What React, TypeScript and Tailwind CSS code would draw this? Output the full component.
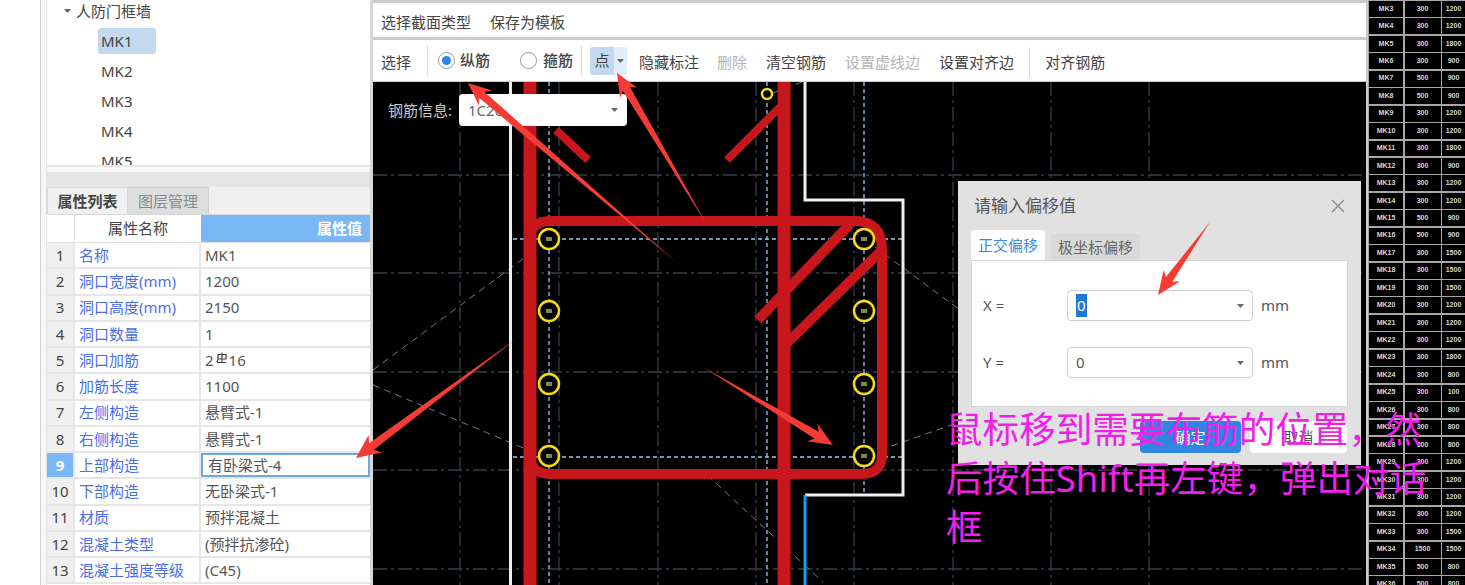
const sans = "font-['Noto_Sans','Noto_Sans_CJK_SC',sans-serif]";

const props = [
    ['名称', 'MK1'],
    ['洞口宽度(mm)', '1200'],
    ['洞口高度(mm)', '2150'],
    ['洞口数量', '1'],
    ['洞口加筋', 'rebar'],
    ['加筋长度', '1100'],
    ['左侧构造', '悬臂式-1'],
    ['右侧构造', '悬臂式-1'],
    ['上部构造', '有卧梁式-4'],
    ['下部构造', '无卧梁式-1'],
    ['材质', '预拌混凝土'],
    ['混凝土类型', '(预拌抗渗砼)'],
    ['混凝土强度等级', '(C45)'],
];

const sheet = [
    ['MK3', '300', '1200'], ['MK4', '300', '1200'], ['MK5', '300', '1800'], ['MK6', '300', '900'],
    ['MK7', '500', '900'], ['MK8', '500', '900'], ['MK9', '300', '1200'], ['MK10', '300', '1200'],
    ['MK11', '300', '1800'], ['MK12', '300', '900'], ['MK13', '300', '1200'], ['MK14', '300', '1200'],
    ['MK15', '500', '900'], ['MK16', '500', '900'], ['MK17', '300', '1500'], ['MK18', '300', '1500'],
    ['MK19', '300', '1500'], ['MK20', '300', '1200'], ['MK21', '300', '1200'], ['MK22', '300', '1200'],
    ['MK23', '300', '1800'], ['MK24', '300', '800'], ['MK25', '300', '100'], ['MK26', '300', '800'],
    ['MK27', '300', '800'], ['MK28', '300', '800'], ['MK29', '300', '1200'], ['MK30', '300', '1200'],
    ['MK31', '300', '1200'], ['MK32', '300', '1200'], ['MK33', '300', '1500'], ['MK34', '1500', '1500'],
    ['MK35', '500', '800'], ['MK36', '500', '800'],
];

const gridX = [460, 559, 658, 756, 854, 953, 1051, 1149];
const gridY = [175, 273, 372, 470, 569];
const bars: [number, number][] = [
    [549, 239], [549, 311], [549, 384], [549, 456],
    [864, 239], [864, 311], [864, 384], [864, 456],
];

function Caret({ className = '' }: { className?: string }) {
    return (
        <svg width="7" height="4" viewBox="0 0 7 4" className={className}>
            <path d="M0 0h7L3.5 4z" fill="#666" />
        </svg>
    );
}

function Rebar() {
    return (
        <span className="flex items-center">
            2
            <svg width="12" height="12" viewBox="0 0 12 12" className="ml-[2px] mr-[1px] -mt-1">
                <path d="M2 2.5h8v4.5H2zM6 0.5v10M1 10.5h9M2 7l-1 3" fill="none" stroke="#444" strokeWidth="1.2" />
            </svg>
            16
        </span>
    );
}

function LeftPanel() {
    return (
        <div className="w-[373px] h-full flex shrink-0 bg-white">
            <div className="w-[41px] border-r border-[#cfcfcf] shrink-0" />
            <div className="w-[5px] bg-[#f6f6f6] shrink-0" />
            <div className="w-[324px] shrink-0 flex flex-col border-l border-[#e2e2e2]">
                <div className="h-[167px] overflow-hidden border-b-2 border-[#e8e8e8] text-[15px] text-[#444] shrink-0">
                    <div className="h-[22px] flex items-center pl-[17px] gap-[5px]">
                        <Caret />
                        <span>人防门框墙</span>
                    </div>
                    <div className="mt-[6px] pl-[51px] flex flex-col gap-1">
                        {['MK1', 'MK2', 'MK3', 'MK4', 'MK5'].map((m, i) => (
                            <div key={m} className={`h-[26px] w-[58px] shrink-0 pl-[3px] flex items-center rounded-[3px] ${i === 0 ? 'bg-[#c3d9f0]' : ''}`}>{m}</div>
                        ))}
                    </div>
                </div>
                <div className="h-[5px] bg-[#f7f7f7] shrink-0" />
                <div className="h-[15px] bg-[#e5e5e5] shrink-0" />
                <div className="h-[28px] flex bg-[#f0f0f0] text-[15px] shrink-0 border-b border-[#d8d8d8]">
                    <div className="w-[81px] flex items-center justify-center font-bold text-[#444] border-x border-t border-[#d8d8d8]">属性列表</div>
                    <div className="w-[81px] flex items-center justify-center text-[#8a8a8a] bg-[#dedede] border-r border-t border-[#cfcfcf]">图层管理</div>
                </div>
                <div className="h-[28px] flex text-[15px] shrink-0 border-b border-[#e2e2e2]">
                    <div className="w-[28px] border-r border-[#e2e2e2]" />
                    <div className="w-[126px] flex items-center justify-center text-[#444]">属性名称</div>
                    <div className="flex-1 bg-[#7ab8f5] text-white font-bold flex items-center justify-end pr-[8px]">属性值</div>
                </div>
                {props.map(([name, value], i) => (
                    <div key={name} className="h-[26.25px] flex text-[15px] shrink-0 border-b-2 border-[#e6e6e6]">
                        <div className={`w-[28px] shrink-0 border-r-2 border-[#e6e6e6] flex items-center justify-center ${i === 8 ? 'bg-[#7ab8f5] text-white font-bold' : 'bg-[#f0f0f0] text-[#444]'}`}>{i + 1}</div>
                        <div className="w-[126px] shrink-0 border-r-2 border-[#e6e6e6] pl-[4px] flex items-center text-[#4a6ee8] whitespace-nowrap">{name}</div>
                        {i === 8 ? (
                            <div className="flex-1 border-2 border-[#6fa8dc] pl-[5px] flex items-center text-[#555]">{value}</div>
                        ) : (
                            <div className="flex-1 pl-[4px] flex items-center text-[#555] whitespace-nowrap">{value === 'rebar' ? <Rebar /> : value}</div>
                        )}
                    </div>
                ))}
            </div>
            <div className="flex-1 bg-[#d8d8d8]" />
        </div>
    );
}

function Tool({ label, off }: { label: string; off?: boolean }) {
    return <span className={off ? 'text-[#b5b5b5]' : 'text-[#444]'}>{label}</span>;
}

function Radio({ on }: { on?: boolean }) {
    return (
        <span className="w-[17px] h-[17px] rounded-full border border-[#999] bg-white flex items-center justify-center shrink-0">
            {on && <span className="w-[9px] h-[9px] rounded-full bg-[#2f86e0]" />}
        </span>
    );
}

function Toolbars() {
    return (
        <div className="shrink-0 bg-white text-[15px]">
            <div className="h-[40px] border-y-[3px] border-[#c9cccf] flex items-center gap-[19px] pl-[8px] pt-[4px] text-[#444]">
                <span>选择截面类型</span>
                <span>保存为模板</span>
            </div>
            <div className="h-[42px] border-b border-[#c9cccf] flex items-center pl-[8px] relative">
                <span className="mt-[3px]"><Tool label="选择" /></span>
                <div className="w-px h-[30px] bg-[#dcdcdc] ml-[16px]" />
                <div className="ml-[10px]"><Radio on /></div>
                <span className="ml-[5px] text-[#444] font-medium">纵筋</span>
                <div className="ml-[30px]"><Radio /></div>
                <span className="ml-[6px] text-[#444] font-medium">箍筋</span>
                <div className="w-px h-[30px] bg-[#dcdcdc] ml-[8px]" />
                <div className="ml-[8px] h-[28px] w-[37px] flex rounded-[3px] overflow-hidden">
                    <div className="w-[24px] bg-[#c3d9f0] flex items-center justify-center text-[#444]">点</div>
                    <div className="flex-1 bg-[#e0edfb] flex items-center justify-center"><Caret /></div>
                </div>
                <div className="ml-[12px] mt-[3px] flex items-center">
                    <Tool label="隐藏标注" />
                    <span className="ml-[18px]"><Tool label="删除" off /></span>
                    <span className="ml-[19px]"><Tool label="清空钢筋" /></span>
                    <span className="ml-[19px]"><Tool label="设置虚线边" off /></span>
                    <span className="ml-[19px]"><Tool label="设置对齐边" /></span>
                    <div className="w-px h-[30px] bg-[#dcdcdc] ml-[15px]" />
                    <span className="ml-[15px]"><Tool label="对齐钢筋" /></span>
                </div>
            </div>
        </div>
    );
}

function Drawing() {
    return (
        <svg className="absolute inset-0 w-full h-full" viewBox="373 82 993 503">
            <g stroke="#343f4b" strokeWidth="1.3" strokeDasharray="14 4 3 4" fill="none">
                {gridX.map((x) => <line key={x} x1={x} y1="82" x2={x} y2="585" />)}
                {gridY.map((y) => <line key={y} x1="373" y1={y} x2="1367" y2={y} />)}
            </g>
            <g stroke="#9cc4e8" strokeWidth="1.3" strokeDasharray="4 3" fill="none">
                <line x1="549" y1="82" x2="549" y2="585" />
                <line x1="767" y1="82" x2="767" y2="585" />
                <line x1="864" y1="82" x2="864" y2="495" />
                <line x1="513" y1="239" x2="902" y2="239" />
                <line x1="513" y1="457" x2="902" y2="457" />
            </g>
            <g stroke="#777" strokeWidth="1" strokeDasharray="7 5" fill="none">
                <line x1="373" y1="370" x2="535" y2="250" />
                <line x1="373" y1="385" x2="540" y2="455" />
                <line x1="875" y1="247" x2="960" y2="310" />
                <line x1="880" y1="450" x2="960" y2="422" />
                <line x1="707" y1="475" x2="823" y2="582" />
                <line x1="773" y1="93" x2="802" y2="82" />
            </g>
            <path d="M805 82V200H903V495H805" fill="none" stroke="#eeeeee" strokeWidth="3" />
            <line x1="510.500" y1="82" x2="510.500" y2="585" stroke="#eeeeee" strokeWidth="3" />
            <line x1="805" y1="495" x2="805" y2="585" stroke="#00a8f0" strokeWidth="3" />
            <g stroke="#c8161d" fill="none">
                <line x1="530" y1="82" x2="530" y2="585" strokeWidth="13" />
                <line x1="784" y1="82" x2="784" y2="585" strokeWidth="13" />
                <path d="M550 221H855Q882 221 882 250V454Q882 474 862 474H550Q530 474 530 454V241Q530 221 550 221Z" strokeWidth="10" />
                <line x1="850" y1="224" x2="758" y2="320" strokeWidth="10" />
                <line x1="880" y1="252" x2="786" y2="344" strokeWidth="10" />
                <line x1="556" y1="130" x2="588" y2="160" strokeWidth="8" />
                <line x1="727" y1="160" x2="780" y2="107" strokeWidth="8" />
            </g>
            {bars.map(([x, y]) => (
                <g key={`${x}-${y}`}>
                    <circle cx={x} cy={y} r="10" fill="#000" stroke="#f5dc14" strokeWidth="2.5" />
                    <rect x={x - 3} y={y - 2} width="6" height="4" fill="#7c8a4a" />
                </g>
            ))}
            <circle cx="767" cy="94" r="5" fill="#000" stroke="#f5dc14" strokeWidth="2.5" />
        </svg>
    );
}

function ComboBox({ value, selected }: { value: string; selected?: boolean }) {
    return (
        <div className="w-[186px] h-[31px] rounded-[4px] border border-[#cfcfcf] bg-white flex items-center justify-between px-[8px] text-[#555]">
            {selected ? <span className="bg-[#1f78d1] text-white px-[1px]">{value}</span> : <span>{value}</span>}
            <Caret />
        </div>
    );
}

function OffsetDialog() {
    return (
        <div className="absolute left-[585px] top-[99px] w-[403px] h-[284px] bg-[#e1e1e1] px-[13px] text-[#555] text-[15px]">
            <div className="h-[49px] flex items-center justify-between pl-[3px] pr-[3px]">
                <span className="text-[17px]">请输入偏移值</span>
                <svg width="14" height="14" viewBox="0 0 14 14">
                    <path d="M1 1l12 12M13 1L1 13" stroke="#888" strokeWidth="1.4" fill="none" />
                </svg>
            </div>
            <div className="flex items-end gap-[6px] h-[30px]">
                <div className="w-[74px] h-[30px] bg-white rounded-t-[3px] flex items-center justify-center text-[#3d8be8]">正交偏移</div>
                <div className="w-[89px] h-[26px] bg-[#d9d9d9] rounded-t-[3px] flex items-center justify-center text-[#666]">极坐标偏移</div>
            </div>
            <div className="h-[147px] bg-white border border-[#d5d5d5] pt-[29px] pl-[11px]">
                <div className="flex items-center h-[31px]">
                    <span className="w-[84px]">X =</span>
                    <ComboBox value="0" selected />
                    <span className="ml-[8px]">mm</span>
                </div>
                <div className="flex items-center h-[31px] mt-[26px]">
                    <span className="w-[84px]">Y =</span>
                    <ComboBox value="0" />
                    <span className="ml-[8px]">mm</span>
                </div>
            </div>
            <div className="flex justify-end gap-[9px] mt-[14px] pr-[1px]">
                <div className="w-[101px] h-[32px] rounded-[4px] bg-[#2f86e0] text-white flex items-center justify-center">确定</div>
                <div className="w-[97px] h-[32px] rounded-[4px] bg-white flex items-center justify-center">取消</div>
            </div>
        </div>
    );
}

function Canvas() {
    return (
        <div className="flex-1 relative bg-black overflow-hidden">
            <Drawing />
            <span className="absolute left-[15px] top-[17px] text-[15px] text-[#c8c8c8]">钢筋信息:</span>
            <div className="absolute left-[86px] top-[12px] w-[168px] h-[32px] bg-white rounded-[4px] flex items-center justify-between px-[9px] text-[15px] text-[#666]">
                <span>1C20</span>
                <Caret />
            </div>
            <OffsetDialog />
        </div>
    );
}

function Sheet() {
    return (
        <div className="flex-1 h-full bg-[#a8a8a8] overflow-hidden pl-[1px] pt-[1px] border-l-2 border-[#c9cccf]">
            {sheet.map((row) => (
                <div key={row[0]} className="h-[17.45px] grid grid-cols-[34px_36px_1fr] gap-x-[1.5px] pb-[1.500px] text-[7px] font-bold text-[#d8d8d8] font-['Liberation_Sans',sans-serif]">
                    {row.map((c, i) => (
                        <div key={i} className="bg-black flex items-center justify-center">{c}</div>
                    ))}
                </div>
            ))}
        </div>
    );
}

// tapered markup arrow: thin at the tail, wide at the head
function arrowPoints(tx: number, ty: number, hx: number, hy: number, len: number, wide: number, neck: number) {
    const d = Math.hypot(hx - tx, hy - ty);
    const ux = (hx - tx) / d;
    const uy = (hy - ty) / d;
    const nx = -uy;
    const ny = ux;
    const bx = hx - ux * len;
    const by = hy - uy * len;
    const nbx = hx - ux * len * 0.8;
    const nby = hy - uy * len * 0.8;
    const pts = [
        [tx, ty],
        [nbx + nx * neck, nby + ny * neck],
        [bx + nx * wide, by + ny * wide],
        [hx, hy],
        [bx - nx * wide, by - ny * wide],
        [nbx - nx * neck, nby - ny * neck],
    ];
    return pts.map((p) => p.join(',')).join(' ');
}

function Arrows() {
    return (
        <svg className="absolute inset-0 w-full h-full pointer-events-none" viewBox="0 0 1465 585">
            <g fill="#f43c35">
                <polygon points={arrowPoints(676, 262, 468, 83, 23, 10, 4)} />
                <polygon points={arrowPoints(707, 225, 617, 73, 23, 10, 4)} />
                <polygon points={arrowPoints(516, 339, 356, 458, 24, 11, 4)} />
                <polygon points={arrowPoints(703, 367, 833, 445, 24, 10, 4)} />
                <polygon points={arrowPoints(1210, 222, 1158, 295, 24, 10, 4)} />
            </g>
        </svg>
    );
}

export default function App() {
    return (
        <div className={`relative w-[1465px] h-[585px] overflow-hidden flex bg-white ${sans}`}>
            <LeftPanel />
            <div className="w-[993px] h-full flex flex-col shrink-0">
                <Toolbars />
                <Canvas />
            </div>
            <Sheet />
            <Arrows />
            <div className="absolute left-[946px] top-[405px] w-[494px] text-[36.6px] leading-[49px] text-[#f020e8]">
                鼠标移到需要布筋的位置，然后按住Shift再左键，弹出对话框
            </div>
        </div>
    );
}
